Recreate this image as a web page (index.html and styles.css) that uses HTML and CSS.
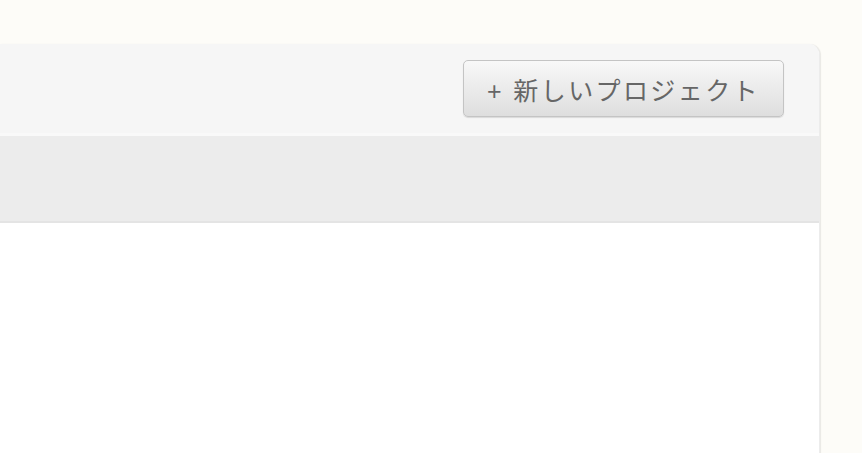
FILE: index.html
```html
<!DOCTYPE html>
<html lang="ja">
<head>
    <meta charset="UTF-8">
    <title>プロジェクト</title>
    <link rel="stylesheet" href="styles.css">
</head>
<body>
    <div class="panel">
        <div class="panel-head">
            <button class="new-btn">+ 新しいプロジェクト</button>
        </div>
        <div class="panel-bar"></div>
        <div class="panel-body"></div>
    </div>
</body>
</html>
```

FILE: styles.css
```css
html, body {
    height: 100%;
}
body {
    margin: 0;
    padding-top: 44px;
    box-sizing: border-box;
    background: #fdfcf8;
    font-family: "Liberation Sans", "Noto Sans CJK JP", sans-serif;
    overflow: hidden;
}
.panel {
    margin-right: 42px;
    height: 420px;
    background: #fff;
    border-radius: 0 11px 0 0;
    box-shadow: 1px 0 1px rgba(0, 0, 0, 0.08);
    border-right: 1px solid #ececec;
    overflow: hidden;
}
.panel-head {
    display: flex;
    justify-content: flex-end;
    padding: 16px 35px 16px 0;
    background: #f6f6f6;
    border-bottom: 3px solid #f9f9f9;
}
.new-btn {
    width: 321px;
    height: 57px;
    border: 1px solid #c4c4c4;
    border-radius: 5px;
    background: linear-gradient(#f8f8f8, #dedede);
    box-shadow: 0 1px 1px rgba(0, 0, 0, 0.12);
    color: #666;
    font-family: "Liberation Sans", "Noto Sans CJK JP", sans-serif;
    font-size: 25px;
    letter-spacing: 2.4px;
    padding: 0;
}
.panel-bar {
    height: 85px;
    background: #ececec;
    border-bottom: 2px solid #e4e4e4;
}
.panel-body {
    background: #fff;
}
```
